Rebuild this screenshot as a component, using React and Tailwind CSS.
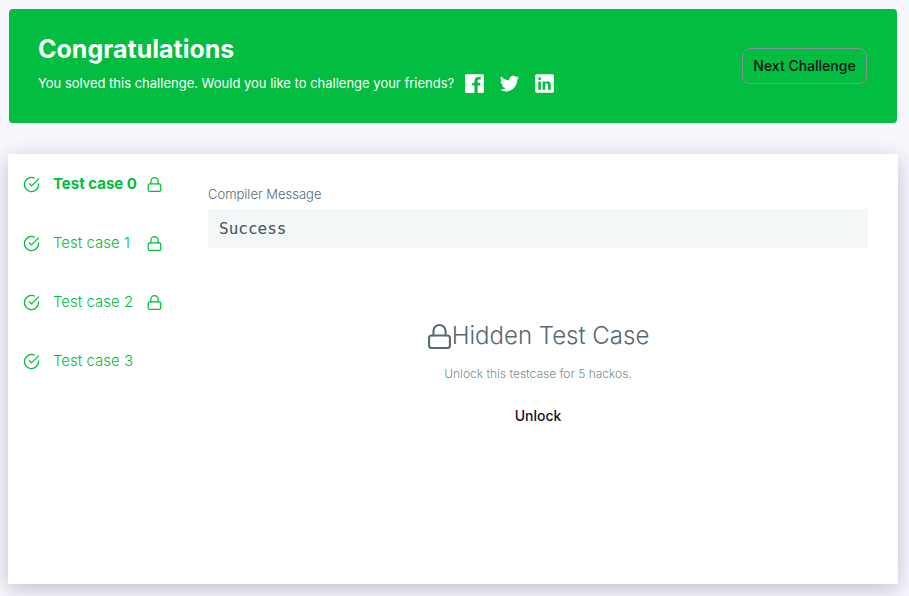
import React from "react";
import { IoLogoFacebook, IoLogoTwitter, IoLogoLinkedin } from "react-icons/io";
import { FiCheckCircle } from "react-icons/fi";

const socials = [
  { name: "Facebook", Icon: IoLogoFacebook, size: "size-[25px]" },
  { name: "Twitter", Icon: IoLogoTwitter, size: "size-[21px]" },
  { name: "LinkedIn", Icon: IoLogoLinkedin, size: "size-[25px]" },
];

const cases = [
  { label: "Test case 0", locked: true, active: true },
  { label: "Test case 1", locked: true },
  { label: "Test case 2", locked: true },
  { label: "Test case 3", locked: false },
];

function LockIcon({ className }) {
  return (
    <svg
      viewBox="0 0 24 24"
      fill="none"
      stroke="currentColor"
      strokeWidth="2"
      strokeLinecap="round"
      strokeLinejoin="round"
      className={className}
      aria-hidden="true"
    >
      <rect x="2" y="11" width="20" height="12" rx="2.4" />
      <path d="M6.2 11V6.8a5.8 5.8 0 0 1 11.6 0V11" />
    </svg>
  );
}

function Banner() {
  return (
    <header className="mr-1 ml-px flex min-h-[114px] items-center justify-between rounded bg-[#02bd3f] pr-[30px] pl-[29px]">
      <div className="pb-1">
        <h1 className="text-[25px] leading-8 font-bold text-white">Congratulations</h1>
        <div className="mt-[6px] flex items-center text-white">
          <p className="text-[13px] leading-6">
            You solved this challenge. Would you like to challenge your friends?
          </p>
          <nav className="ml-2 flex gap-[10px]" aria-label="Share">
            {socials.map(({ name, Icon, size }) => (
              <a
                key={name}
                href="#"
                aria-label={name}
                className="flex size-[25px] items-center justify-center"
              >
                <Icon className={size} />
              </a>
            ))}
          </nav>
        </div>
      </div>
      <button
        type="button"
        className="h-9 w-[125px] rounded-lg border border-[#8c8f9f] text-sm font-medium whitespace-nowrap text-[#0e141e]"
      >
        Next Challenge
      </button>
    </header>
  );
}

function CaseList() {
  return (
    <ul className="flex w-[170px] shrink-0 flex-col gap-[34px] pt-[18px] pl-[15px]">
      {cases.map(({ label, locked, active }) => (
        <li key={label}>
          <button type="button" className="flex h-[25px] items-center text-[#02bd3f]">
            <FiCheckCircle strokeWidth={1.8} className="size-[17px]" />
            <span
              className={
                active
                  ? "ml-[13px] w-[94px] text-left text-[15px] font-bold"
                  : "ml-[13px] w-[94px] text-left text-[15px] font-light"
              }
            >
              {label}
            </span>
            {locked && <LockIcon className="size-[15px]" />}
          </button>
        </li>
      ))}
    </ul>
  );
}

export default function App() {
  return (
    <div className="min-h-screen bg-[#f8f7fe] px-2 pt-[9px] pb-3 font-['Inter','Liberation_Sans',sans-serif]">
      <Banner />
      <main className="mt-[31px] mr-[3px] flex min-h-[430px] bg-white shadow-[0_5px_20px_rgba(30,25,50,0.25)]">
        <CaseList />
        <section className="flex-1 px-[30px] pt-[30px]">
          <h2 className="text-[13px] leading-5 font-light text-[#576871]">Compiler Message</h2>
          <pre className="mt-[5px] bg-[#f3f7f7] px-[11px] py-2 font-['DejaVu_Sans_Mono','Liberation_Mono',monospace] text-base leading-[23px] text-[#4a525c]">
            Success
          </pre>
          <div className="mt-[70px] flex flex-col items-center">
            <h3 className="flex items-center text-2xl leading-9 font-light text-[#576871]">
              <LockIcon className="size-[25px]" />
              Hidden Test Case
            </h3>
            <p className="mt-[10px] text-xs leading-5 font-light text-[#738f93]">
              Unlock this testcase for 5 hackos.
            </p>
            <button type="button" className="mt-5 px-3 text-sm leading-6 font-medium text-[#0e141e]">
              Unlock
            </button>
          </div>
        </section>
      </main>
    </div>
  );
}
